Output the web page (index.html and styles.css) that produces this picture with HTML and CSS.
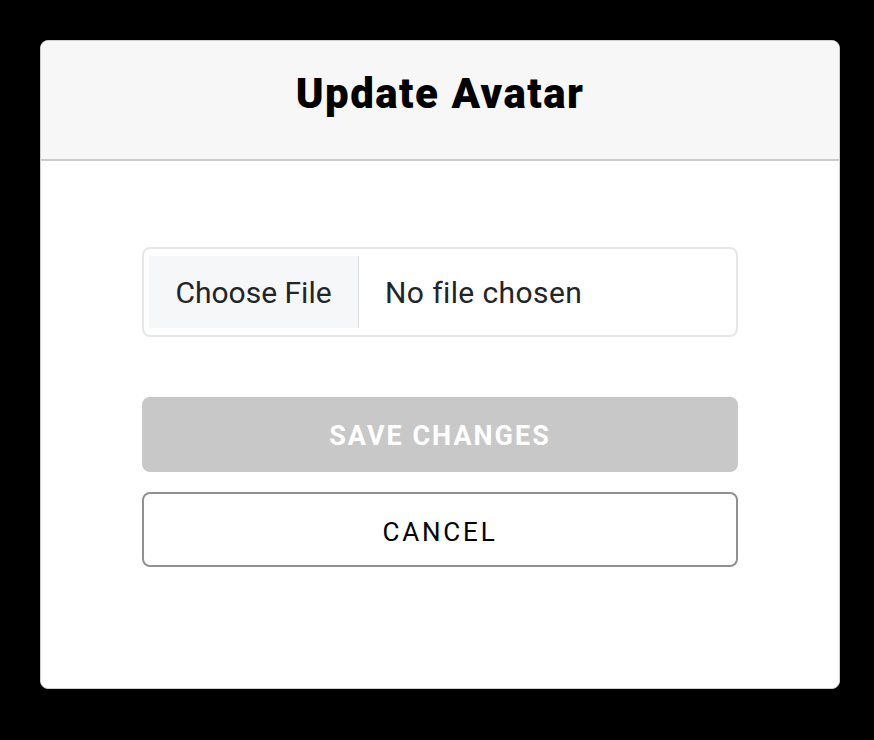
FILE: index.html
```html
<!DOCTYPE html>
<html>
<head>
<meta charset="utf-8">
<link rel="stylesheet" href="styles.css">
</head>
<body>
<div class="dialog">
  <div class="dialog-header">
    <h1 class="title">Update Avatar</h1>
  </div>
  <div class="dialog-body">
    <label class="file-input">
      <span class="file-button">Choose File</span>
      <span class="file-name">No file chosen</span>
    </label>
    <button class="btn btn-save" disabled>SAVE CHANGES</button>
    <button class="btn btn-cancel">CANCEL</button>
  </div>
</div>
</body>
</html>
```
FILE: styles.css
```css
html, body {
  margin: 0;
  padding: 0;
  background: #000;
}
body {
  padding: 40px 34px 51px 40px;
  font-family: Roboto, "Liberation Sans", sans-serif;
}
.dialog {
  width: 798px;
  height: 647px;
  background: #fff;
  border: 1px solid #cfcfcf;
  border-radius: 8px;
  overflow: hidden;
  display: flex;
  flex-direction: column;
}
.dialog-header {
  height: 120px;
  box-sizing: border-box;
  padding-bottom: 14px;
  background: #f7f7f7;
  border-bottom: 2px solid #cccccc;
  display: flex;
  align-items: center;
  justify-content: center;
  flex: none;
}
.title {
  margin: 0;
  font-size: 42px;
  font-weight: 900;
  color: #000;
  letter-spacing: 1.5px;
}
.dialog-body {
  padding: 86px 101px 0 101px;
  display: flex;
  flex-direction: column;
}
.file-input {
  height: 72px;
  border: 2px solid #e6e7e9;
  border-radius: 8px;
  padding: 7px 5px;
  display: flex;
  align-items: stretch;
}
.file-button {
  width: 209px;
  background: #f6f7f9;
  border-right: 1px solid #dcdde0;
  display: flex;
  align-items: center;
  justify-content: center;
  font-size: 30px;
  color: #212529;
}
.file-name {
  display: flex;
  align-items: center;
  padding-left: 26px;
  font-size: 30px;
  letter-spacing: 0.4px;
  color: #212529;
}
.btn {
  height: 75px;
  border-radius: 8px;
  font-family: Roboto, "Liberation Sans", sans-serif;
  width: 100%;
  padding: 0;
}
.btn-save {
  margin-top: 60px;
  background: #c8c8c8;
  border: none;
  color: #fff;
  font-size: 27px;
  font-weight: 700;
  letter-spacing: 2px;
  padding-top: 2px;
}
.btn-cancel {
  margin-top: 20px;
  background: #fff;
  border: 2px solid #919191;
  color: #000;
  font-size: 26px;
  font-weight: 400;
  letter-spacing: 2.8px;
  padding-top: 4px;
}
```
